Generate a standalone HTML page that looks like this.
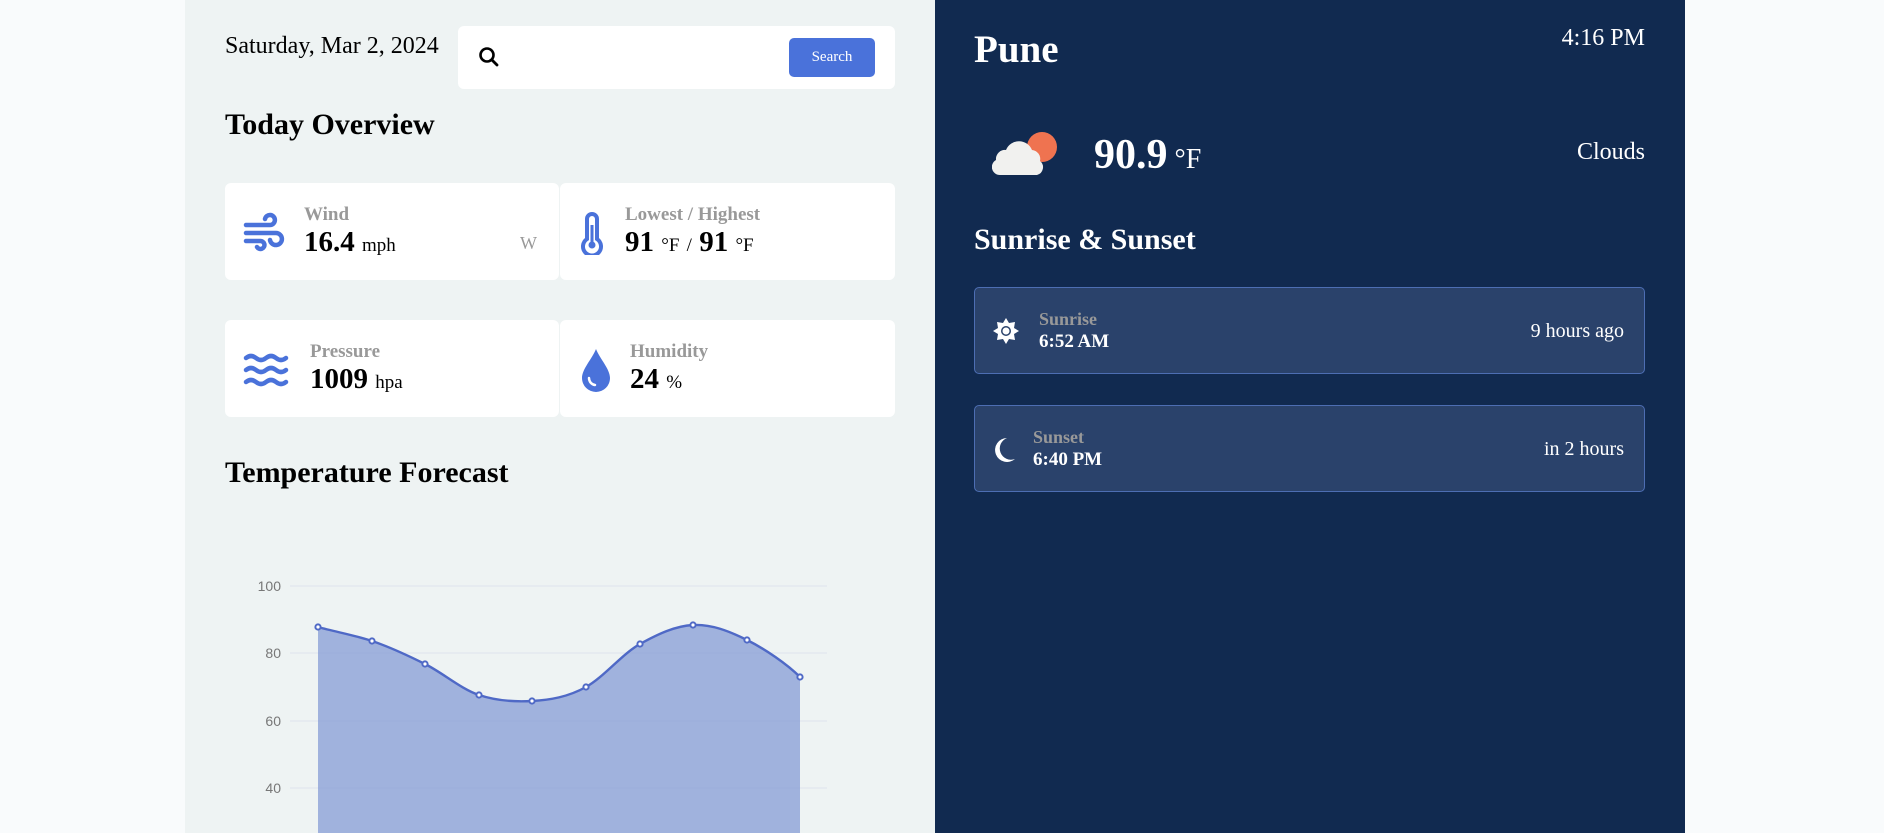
<!DOCTYPE html>
<html><head><meta charset="utf-8"><style>
*{margin:0;padding:0;box-sizing:border-box}
body{width:1884px;height:833px;background:#f9fbfc;font-family:"Liberation Serif",serif;position:relative;overflow:hidden}
.abs{position:absolute;white-space:nowrap}
#left{position:absolute;left:185px;top:0;width:750px;height:833px;background:#eef3f3}
#right{position:absolute;left:935px;top:0;width:750px;height:833px;background:#112a50;color:#fff}
.card{position:absolute;background:#fff;border-radius:6px}
.lbl{font-weight:bold;color:#999;font-size:19px}
.val{font-weight:bold;font-size:29px;color:#000}
.unit{font-size:19px;font-weight:normal}
.sbox{position:absolute;left:39px;width:671px;height:87px;background:#2a426b;border:1px solid #4d6eb3;border-radius:5px}
</style></head><body>
<div id="left">
<div class="abs" style="left:40px;top:33px;font-size:24px">Saturday, Mar 2, 2024</div>
<div class="card" style="left:273px;top:26px;width:437px;height:63px">
<svg class="abs" style="left:20px;top:20px" width="22" height="22" viewBox="0 0 22 22"><circle cx="9" cy="9" r="6.5" fill="none" stroke="#000" stroke-width="2.6"/><path d="M14 14l5 5" stroke="#000" stroke-width="2.8" stroke-linecap="round"/></svg>
<div class="abs" style="left:331px;top:12px;width:86px;height:39px;background:#4a72da;border-radius:5px;color:#fff;font-size:15px;text-align:center;line-height:39px">Search</div>
</div>
<div class="abs" style="left:40px;top:108px;font-size:30px;font-weight:bold">Today Overview</div>

<div class="card" style="left:40px;top:183px;width:334px;height:97px"></div>
<div class="card" style="left:375px;top:183px;width:335px;height:97px"></div>
<div class="card" style="left:40px;top:320px;width:334px;height:97px"></div>
<div class="card" style="left:375px;top:320px;width:335px;height:97px"></div>

<svg class="abs" style="left:58px;top:212px" width="42" height="42" viewBox="0 0 42 42" fill="none" stroke="#4a72da" stroke-width="4.5" stroke-linecap="round"><path d="M3 13h24a5 5 0 1 0-5-6"/><path d="M3 21h30a6 6 0 1 1-6 7"/><path d="M3 29h14a4 4 0 1 1-3 6"/></svg>
<div class="abs lbl" style="left:119px;top:204px">Wind</div>
<div class="abs val" style="left:119px;top:226px">16.4 <span class="unit">mph</span></div>
<div class="abs" style="left:335px;top:233px;font-size:18px;color:#999">W</div>

<svg class="abs" style="left:395px;top:211px" width="24" height="44" viewBox="0 0 24 44"><path d="M7 28V8a5 5 0 0 1 10 0v20a9 9 0 1 1-10 0z" fill="none" stroke="#4a72da" stroke-width="4"/><circle cx="12" cy="34" r="3.5" fill="#4a72da"/><path d="M12 34V14" stroke="#4a72da" stroke-width="3"/></svg>
<div class="abs lbl" style="left:440px;top:204px">Lowest / Highest</div>
<div class="abs val" style="left:440px;top:226px">91 <span class="unit">°F</span> <span class="unit">/</span> 91 <span class="unit">°F</span></div>

<svg class="abs" style="left:58px;top:350px" width="48" height="42" viewBox="0 0 48 42" fill="none" stroke="#4a72da" stroke-width="4.5" stroke-linecap="round"><path d="M3 8q5-4 10 0t10 0t10 0t10 0"/><path d="M3 20q5-4 10 0t10 0t10 0t10 0"/><path d="M3 32q5-4 10 0t10 0t10 0t10 0"/></svg>
<div class="abs lbl" style="left:125px;top:341px">Pressure</div>
<div class="abs val" style="left:125px;top:363px">1009 <span class="unit">hpa</span></div>

<svg class="abs" style="left:395px;top:347px" width="32" height="46" viewBox="0 0 32 46"><path d="M16 2C12 12 2 22 2 31a14 14 0 0 0 28 0C30 22 20 12 16 2z" fill="#4a72da"/><path d="M9 31a7 7 0 0 0 6 7" fill="none" stroke="#fff" stroke-width="2.5" stroke-linecap="round"/></svg>
<div class="abs lbl" style="left:445px;top:341px">Humidity</div>
<div class="abs val" style="left:445px;top:363px">24 <span class="unit">%</span></div>

<div class="abs" style="left:40px;top:456px;font-size:30px;font-weight:bold">Temperature Forecast</div>

<svg class="abs" style="left:0;top:0" width="750" height="833">
<g stroke="#dde3ee" stroke-width="1"><line x1="105" y1="586" x2="642" y2="586"/><line x1="105" y1="653" x2="642" y2="653"/><line x1="105" y1="721" x2="642" y2="721"/><line x1="105" y1="788" x2="642" y2="788"/></g>
<g font-family="Liberation Sans,sans-serif" font-size="14" fill="#777" text-anchor="end"><text x="96" y="591">100</text><text x="96" y="658">80</text><text x="96" y="726">60</text><text x="96" y="793">40</text></g>
<path d="M133 627C151 632 169 635 187 641C205 647 222 655 240 664C258 673 276 689 294 695C312 701 329 702 347 701C365 700 383 697 401 687C419 677 437 654 455 644C473 634 490 626 508 625C526 624 544 631 562 640C580 649 602 664 615 677L615 833L133 833Z" fill="#8a9fd6" fill-opacity="0.78"/>
<path d="M133 627C151 632 169 635 187 641C205 647 222 655 240 664C258 673 276 689 294 695C312 701 329 702 347 701C365 700 383 697 401 687C419 677 437 654 455 644C473 634 490 626 508 625C526 624 544 631 562 640C580 649 602 664 615 677" fill="none" stroke="#4f69c6" stroke-width="2.4"/>
<g fill="#fff" stroke="#4f69c6" stroke-width="2"><circle cx="133" cy="627" r="2.6"/><circle cx="187" cy="641" r="2.6"/><circle cx="240" cy="664" r="2.6"/><circle cx="294" cy="695" r="2.6"/><circle cx="347" cy="701" r="2.6"/><circle cx="401" cy="687" r="2.6"/><circle cx="455" cy="644" r="2.6"/><circle cx="508" cy="625" r="2.6"/><circle cx="562" cy="640" r="2.6"/><circle cx="615" cy="677" r="2.6"/></g>
</svg>
</div>

<div id="right">
<div class="abs" style="left:39px;top:27px;font-size:39px;font-weight:bold">Pune</div>
<div class="abs" style="right:40px;top:25px;font-size:24px">4:16 PM</div>
<svg class="abs" style="left:57px;top:128px" width="70" height="50" viewBox="0 0 70 50"><circle cx="50" cy="19" r="15" fill="#ef7350"/><path d="M8 47a8 8 0 0 1-4-15a9 9 0 0 1 10-10a14 14 0 0 1 26 0a9 9 0 0 1 8 11a8 8 0 0 1-3 14z" fill="#f1f1ef"/></svg>
<div class="abs" style="left:159px;top:131px;font-size:42px;font-weight:bold">90.9<span style="font-size:28px;font-weight:normal"> °F</span></div>
<div class="abs" style="right:40px;top:139px;font-size:24px">Clouds</div>
<div class="abs" style="left:39px;top:223px;font-size:30px;font-weight:bold">Sunrise &amp; Sunset</div>

<div class="sbox" style="top:287px">
<svg class="abs" style="left:17px;top:29px" width="28" height="28" viewBox="0 0 28 28"><path d="M14 1l3 5 6-1-1 6 5 3-5 3 1 6-6-1-3 5-3-5-6 1 1-6-5-3 5-3-1-6 6 1z" fill="#fff"/><circle cx="14" cy="14" r="5" fill="#2a426b"/><circle cx="14" cy="14" r="3.5" fill="#fff"/></svg>
<div class="abs" style="left:64px;top:21px;font-size:18px;font-weight:bold;color:#999">Sunrise</div>
<div class="abs" style="left:64px;top:43px;font-size:19px;font-weight:bold">6:52 AM</div>
<div class="abs" style="right:20px;top:32px;font-size:20px">9 hours ago</div>
</div>
<div class="sbox" style="top:405px">
<svg class="abs" style="left:17px;top:30px" width="24" height="28" viewBox="0 0 24 28"><path d="M15 2a12 12 0 1 0 8 21A10 10 0 0 1 15 2z" fill="#fff"/></svg>
<div class="abs" style="left:58px;top:21px;font-size:18px;font-weight:bold;color:#999">Sunset</div>
<div class="abs" style="left:58px;top:43px;font-size:19px;font-weight:bold">6:40 PM</div>
<div class="abs" style="right:20px;top:32px;font-size:20px">in 2 hours</div>
</div>
</div>
</body></html>
